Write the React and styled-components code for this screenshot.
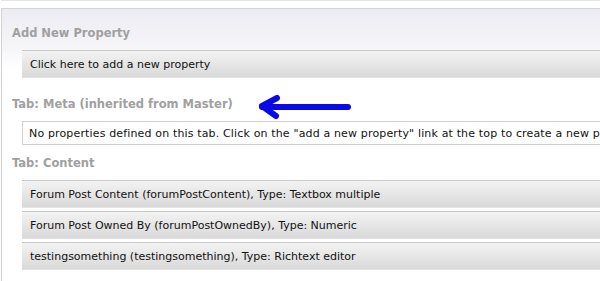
import styled, { createGlobalStyle } from 'styled-components';

const GlobalStyle = createGlobalStyle`
  html, body {
    margin: 0;
    padding: 0;
    background: #fff;
    overflow: hidden;
  }
  body {
    font-family: "DejaVu Sans", Verdana, sans-serif;
  }
`;

const Page = styled.div`
  width: 600px;
  height: 281px;
  overflow: hidden;
  position: relative;
`;

const TopStrip = styled.div`
  height: 9px;
  box-sizing: border-box;
  border-top: 1px solid #e4e4e4;
  border-bottom: 1px solid #d4d4d4;
  margin-left: 1px;
`;

const Panel = styled.div`
  width: 660px;
  margin-left: 1px;
  border-left: 1px solid #d0d0d0;
  padding-left: 10px;
  height: 272px;
  background: linear-gradient(#ebebf2 0, #f6f6f9 40px, #fff 60px);
`;

const SectionTitle = styled.h2`
  margin: 0;
  padding-top: ${p => p.$top}px;
  height: 16px;
  line-height: 16px;
  font-size: 11.5px;
  font-weight: bold;
  color: #a0a0a0;
  white-space: nowrap;
`;

const List = styled.div`
  margin: 9px 0 0 10px;
  display: flex;
  flex-direction: column;
  gap: 3px;
`;

const Row = styled.div`
  height: 28px;
  box-sizing: border-box;
  padding-left: 8px;
  display: flex;
  align-items: center;
  border-top: 1px solid #cacaca;
  border-bottom: 1px solid #e2e2e2;
  background: linear-gradient(#f3f3f3, #d9d9d9);
  font-size: 11px;
  color: #111;
  white-space: nowrap;
`;

const Notice = styled.div`
  margin: 9px 0 0 10px;
  height: 24px;
  box-sizing: border-box;
  padding-left: 6px;
  display: flex;
  align-items: center;
  border: 1px solid #cfcfcf;
  border-right: none;
  background: #fff;
  font-size: 11px;
  letter-spacing: 0.15px;
  color: #111;
  white-space: nowrap;
  overflow: hidden;
`;

const Arrow = styled.svg`
  position: absolute;
  left: 252px;
  top: 92px;
`;

const properties = [
  'Forum Post Content (forumPostContent), Type: Textbox multiple',
  'Forum Post Owned By (forumPostOwnedBy), Type: Numeric',
  'testingsomething (testingsomething), Type: Richtext editor',
];

const App = () => (
  <Page>
    <GlobalStyle />
    <TopStrip />
    <Panel>
      <SectionTitle $top={16}>Add New Property</SectionTitle>
      <List>
        <Row>Click here to add a new property</Row>
      </List>
      <SectionTitle $top={18}>Tab: Meta (inherited from Master)</SectionTitle>
      <Notice>
        No properties defined on this tab. Click on the "add a new property" link at the top to create a new property.
      </Notice>
      <SectionTitle $top={10}>Tab: Content</SectionTitle>
      <List>
        {properties.map(p => <Row key={p}>{p}</Row>)}
      </List>
    </Panel>
    <Arrow width="104" height="30" viewBox="0 0 104 30">
      <g stroke="#0a0ae6" strokeWidth="6" strokeLinecap="round" strokeLinejoin="round" fill="none">
        <path d="M10 15 L96 15" />
        <path d="M25 6 L10 14 L24 24" />
      </g>
    </Arrow>
  </Page>
);

export default App;
